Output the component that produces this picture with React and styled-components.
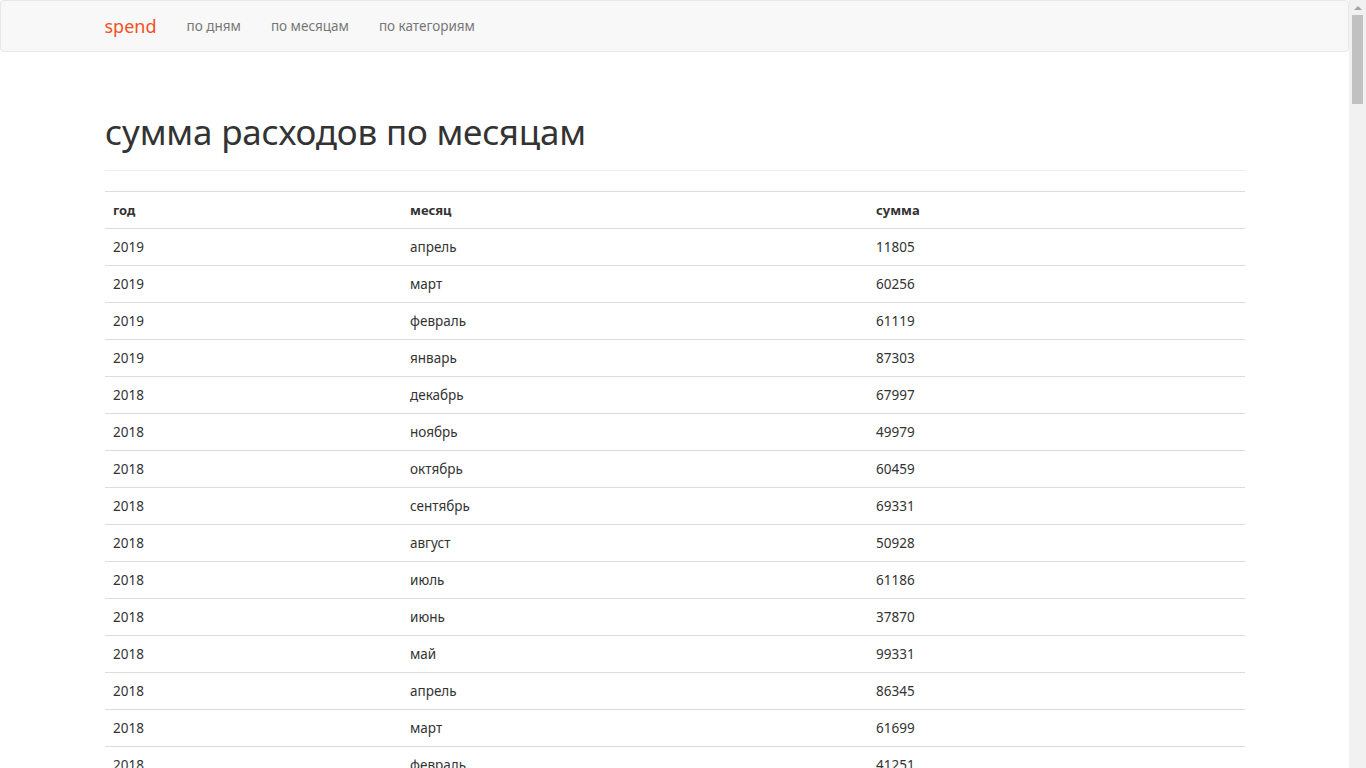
import React from "react";
import styled, { createGlobalStyle } from "styled-components";

const GlobalStyle = createGlobalStyle`
  body {
    margin: 0;
    padding-right: 17px;
    font-family: "Noto Sans", "Open Sans", sans-serif;
    font-size: 14px;
    line-height: 20px;
    color: #333;
    background: #fff;
  }
`;

const Scrollbar = styled.div`
  position: fixed;
  top: 0;
  right: 0;
  width: 17px;
  height: 100vh;
  background: #f1f1f1;
`;

const ScrollArrow = styled.div`
  width: 0;
  height: 0;
  margin: 6px auto 0;
  border-left: 4px solid transparent;
  border-right: 4px solid transparent;
  border-bottom: 4px solid #a3a3a3;
`;

const ScrollThumb = styled.div`
  width: 11px;
  height: 89px;
  margin: 5px auto 0;
  background: #c1c1c1;
`;

const Navbar = styled.nav`
  height: 50px;
  background: #f8f8f8;
  border: 1px solid #e7e7e7;
  border-radius: 4px;
`;

const NavInner = styled.div`
  max-width: 1140px;
  margin: 0 auto;
  height: 50px;
  display: flex;
  align-items: center;
  gap: 30px;
`;

const Brand = styled.a`
  font-size: 18px;
  color: #f4511e;
  text-decoration: none;
`;

const NavLink = styled.a`
  font-size: 13.5px;
  color: #777;
  text-decoration: none;
`;

const Container = styled.main`
  max-width: 1140px;
  margin: 0 auto;
  padding-left: 1px;
`;

const PageHeader = styled.div`
  margin: 60px 0 20px;
  padding-bottom: 18px;
  border-bottom: 1px solid #eee;
`;

const Title = styled.h1`
  margin: 0;
  font-size: 35px;
  font-weight: 400;
  line-height: 40px;
  color: #333;
  letter-spacing: -0.2px;
`;

const Table = styled.table`
  width: 100%;
  table-layout: fixed;
  border-collapse: collapse;
  border-top: 1px solid #ddd;
`;

const HeadCell = styled.th`
  text-align: left;
  font-weight: 700;
  font-size: 13px;
  padding: 8px;
  border-bottom: 1px solid #ddd;
  width: ${(p) => p.$w || "auto"};
`;

const Cell = styled.td`
  padding: 8px;
  font-size: 13.5px;
  border-bottom: 1px solid #ddd;
`;

const rows = [
  [2019, "апрель", 11805],
  [2019, "март", 60256],
  [2019, "февраль", 61119],
  [2019, "январь", 87303],
  [2018, "декабрь", 67997],
  [2018, "ноябрь", 49979],
  [2018, "октябрь", 60459],
  [2018, "сентябрь", 69331],
  [2018, "август", 50928],
  [2018, "июль", 61186],
  [2018, "июнь", 37870],
  [2018, "май", 99331],
  [2018, "апрель", 86345],
  [2018, "март", 61699],
  [2018, "февраль", 41251],
  [2018, "январь", 58740],
  [2017, "декабрь", 72114],
  [2017, "ноябрь", 53420],
];

export default function App() {
  return (
    <>
      <GlobalStyle />
      <Navbar>
        <NavInner>
          <Brand href="#">spend</Brand>
          <NavLink href="#">по дням</NavLink>
          <NavLink href="#">по месяцам</NavLink>
          <NavLink href="#">по категориям</NavLink>
        </NavInner>
      </Navbar>
      <Container>
        <PageHeader>
          <Title>сумма расходов по месяцам</Title>
        </PageHeader>
        <Table>
          <thead>
            <tr>
              <HeadCell $w="281px">год</HeadCell>
              <HeadCell $w="450px">месяц</HeadCell>
              <HeadCell>сумма</HeadCell>
            </tr>
          </thead>
          <tbody>
            {rows.map(([y, m, s], i) => (
              <tr key={i}>
                <Cell>{y}</Cell>
                <Cell>{m}</Cell>
                <Cell>{s}</Cell>
              </tr>
            ))}
          </tbody>
        </Table>
      </Container>
      <Scrollbar>
        <ScrollArrow />
        <ScrollThumb />
      </Scrollbar>
    </>
  );
}
